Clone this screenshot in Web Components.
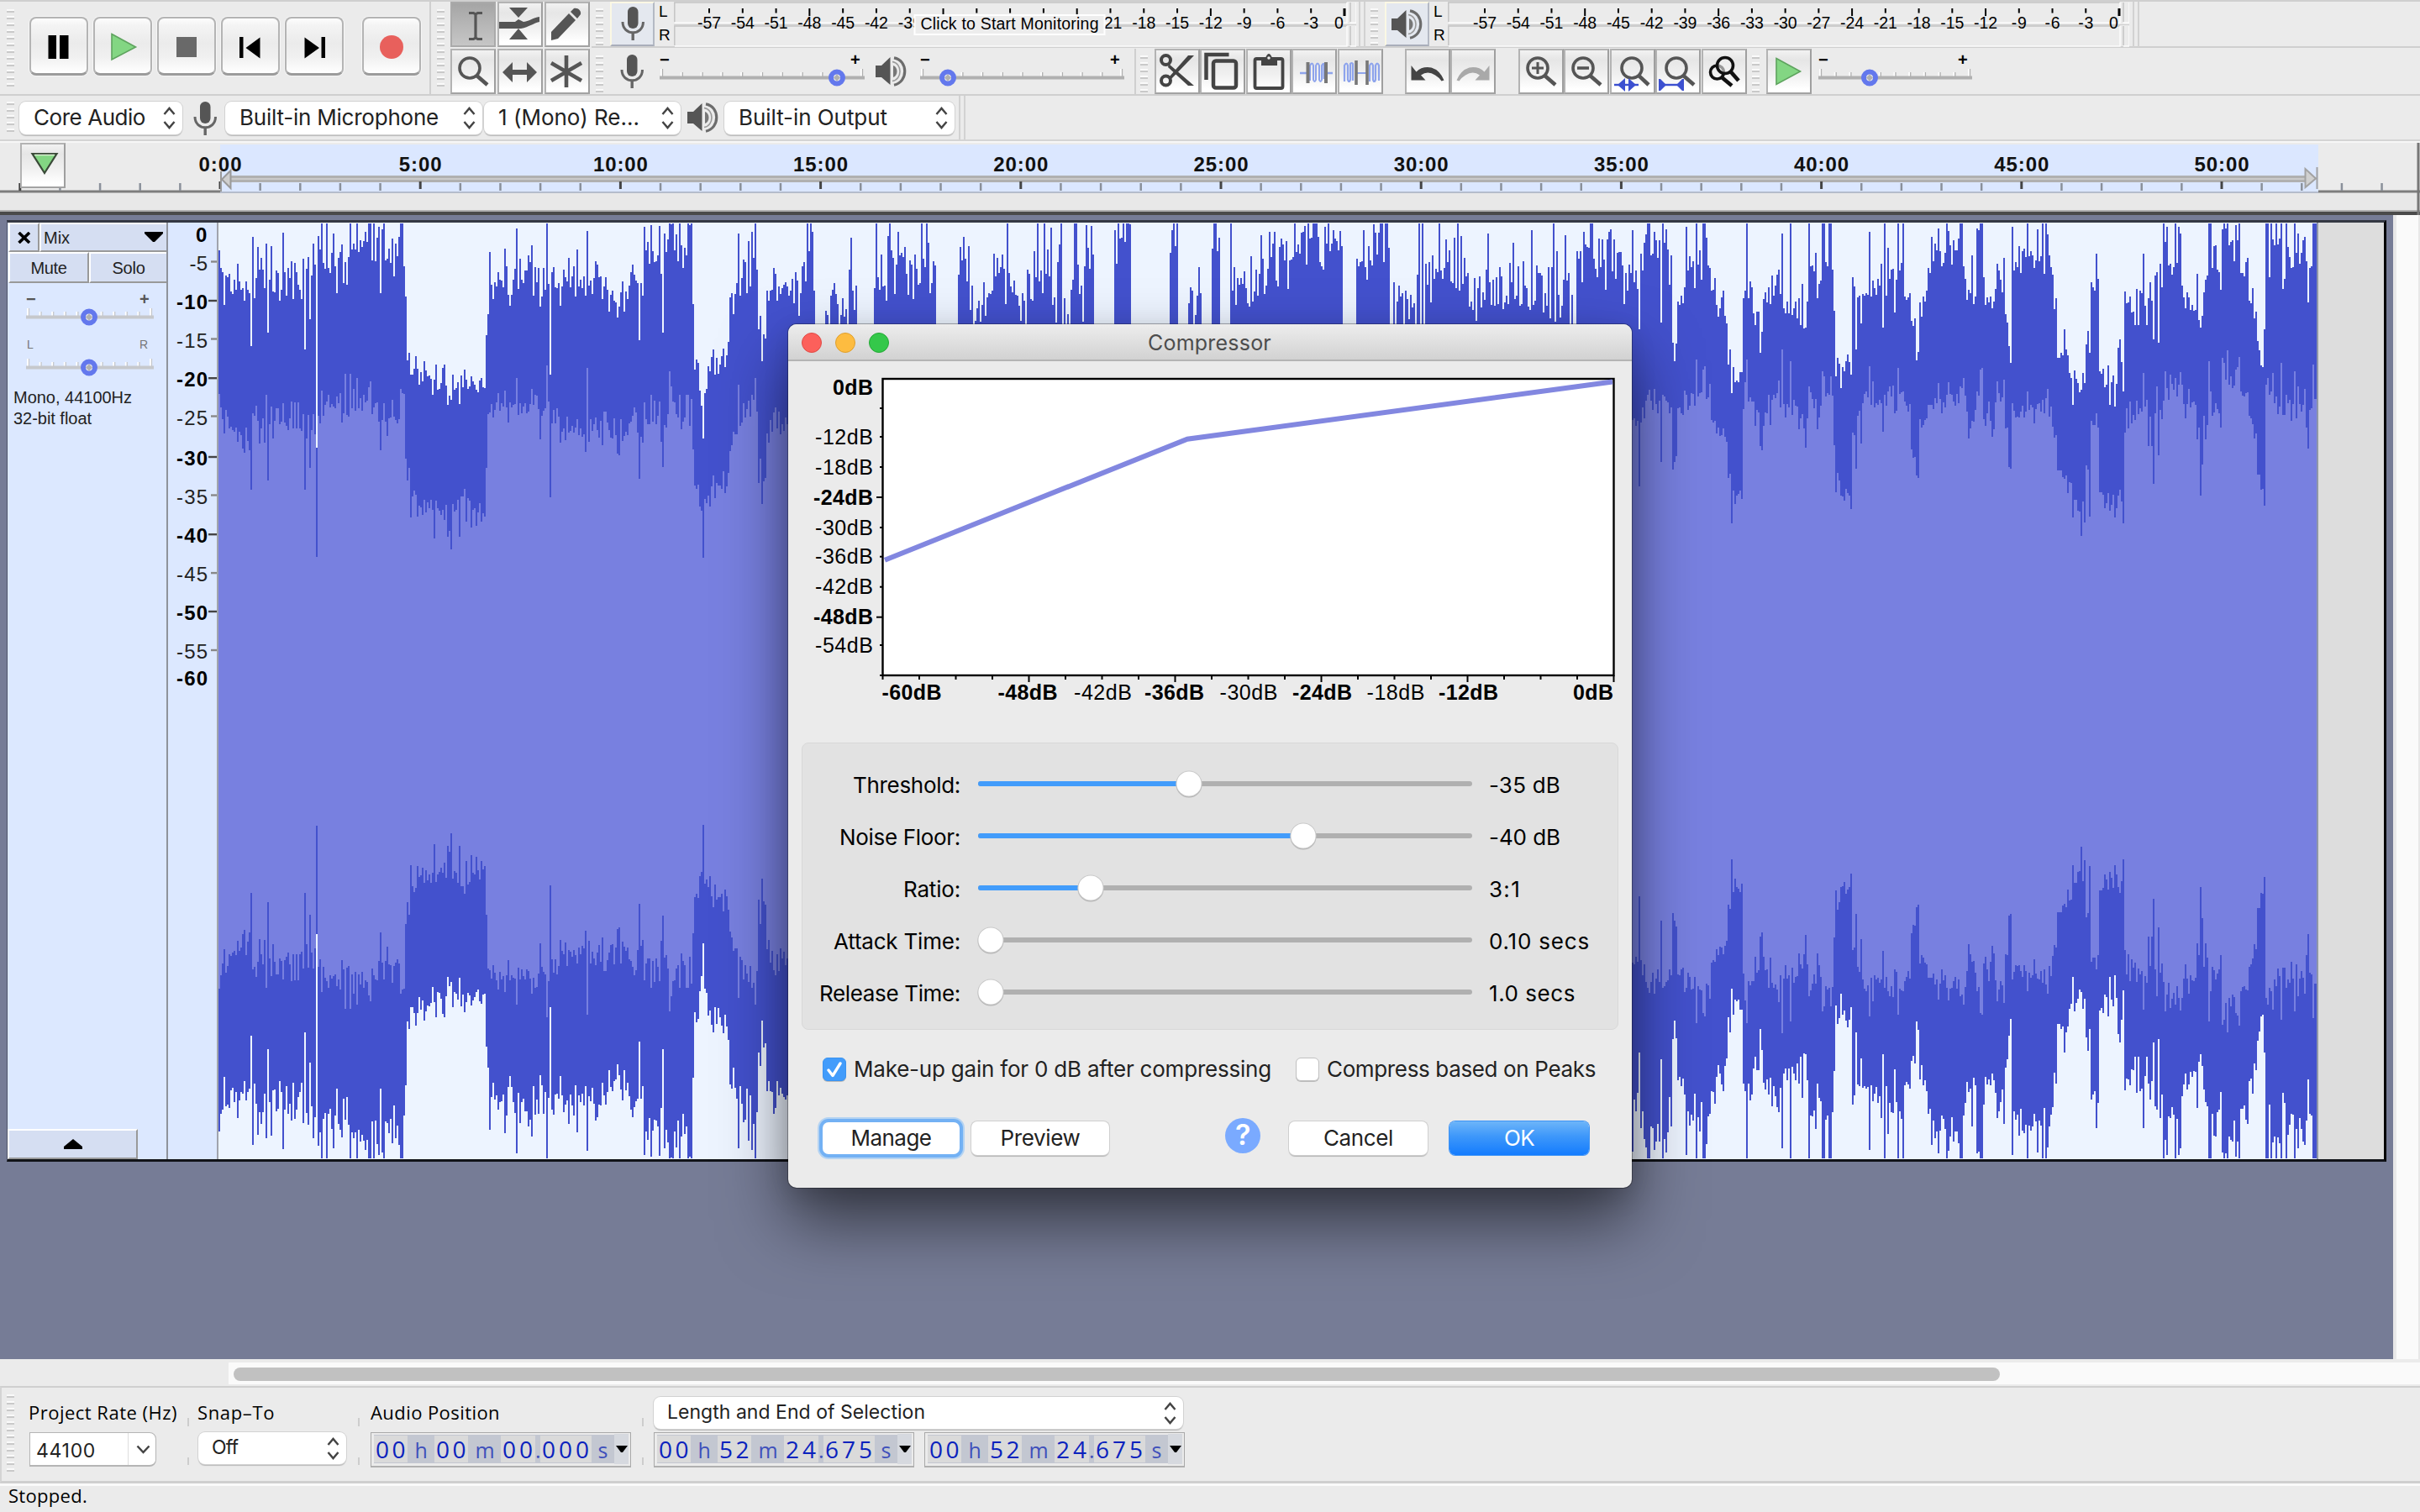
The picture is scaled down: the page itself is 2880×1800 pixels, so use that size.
<!DOCTYPE html>
<html lang="en">
<head>
<meta charset="utf-8">
<title>Mix</title>
<style>
html,body{margin:0;padding:0;width:2880px;height:1800px;overflow:hidden;background:#ebebeb}
body{font-family:Inter,"Liberation Sans",sans-serif;color:#000}
</style>
</head>
<body>
<audio-app></audio-app>
<script>
const SANS = '"Liberation Sans",sans-serif';
const UI = 'Inter,"Liberation Sans",sans-serif';
const HUM = '"Open Sans","Noto Sans",sans-serif';
const pen = document.createElement('canvas').getContext('2d');

function define(name, render) {
  customElements.define(name, class extends HTMLElement {
    connectedCallback() {
      if (this.shadowRoot) return;
      const root = this.attachShadow({ mode: 'open' });
      root.innerHTML = render(this);
    }
  });
}
const num = (el, k, d = 0) => el.hasAttribute(k) ? parseFloat(el.getAttribute(k)) : d;

/* One line of text, tracked so that it fills the width w */
define('fit-text', el => {
  const w = num(el, 'w'), size = num(el, 'size', 26), weight = el.getAttribute('weight') || '400';
  const fam = { ui: UI, sans: SANS, hum: HUM }[el.getAttribute('face') || 'ui'];
  const txt = el.textContent;
  pen.font = `${weight} ${size}px ${fam}`;
  const ls = w ? (w - pen.measureText(txt).width) / txt.length : 0;
  return `<style>:host{display:block;flex:none;white-space:nowrap;${w ? `width:${w}px;` : ''}font:${weight} ${size}px/1.2 ${fam};letter-spacing:${ls.toFixed(3)}px}</style><slot></slot>`;
});
const T = (txt, w, size = 26, face = 'ui', style = '', weight = '400') =>
  `<fit-text w="${w}" size="${size}" face="${face}" weight="${weight}" style="${style}">${txt}</fit-text>`;

/* Text on an axis inside an svg */
const S = (x, y, txt, w, size, anchor = 'middle', bold = false, fill = '#000') => {
  const left = anchor === 'middle' ? x - w / 2 : anchor === 'end' ? x - w : x;
  return `<text x="${left}" y="${y}" textLength="${w}" font-size="${size}" font-family='${SANS}' font-weight="${bold ? 700 : 400}" fill="${fill}">${txt}</text>`;
};

const G = '#555';
const lens = (cx, cy, hx, hy, r = 12, c = G) =>
  `<circle cx="${cx}" cy="${cy}" r="${r}" fill="none" stroke="${c}" stroke-width="3.6"/><path d="M${cx + r * .72} ${cy + r * .78}L${hx} ${hy}" stroke="${c}" stroke-width="4.6"/>`;
const ICONS = {
  pause: `<path d="M22.5 22h9.5v28h-9.5zM36 22h10.5v28H36z" fill="#000"/>`,
  play: `<path d="M22 20.500L50.500 36L22 51z" fill="#83d683" stroke="#5ea35e" stroke-width="1.6"/>`,
  stop: `<path d="M23 24h24v24H23z" fill="#696969"/>`,
  prev: `<path d="M22 24h4.500v25H22zM46.500 24.500v25L29.500 37z" fill="#000"/>`,
  next: `<path d="M43.500 24h4.500v25h-4.500zM23.500 24.500v25L41 37z" fill="#000"/>`,
  record: `<circle cx="35" cy="36" r="14" fill="#e8605c"/>`,
  ibeam: `<path d="M22 13.500h5.500l2.500 1.500l2.500-1.500H38M22 44.500h5.500l2.500-1.500l2.500 1.500H38M30 14.500v29" stroke="${G}" stroke-width="3.200" fill="none"/>`,
  envelope: `<path d="M14 7h22L25 19zM14 45h22L25 32z" fill="${G}"/><path d="M2 24h19l4-3l6 3c8-1 11-5 19-6v6c-8 2-12 6-22 8H2z" fill="${G}"/>`,
  pencil: `<path d="M8 46v-10L29 14l8 8L16 44zM31 12l4-4c5-1 9 3 8 7l-4 5z" fill="${G}"/>`,
  zoom: lens(23, 23, 44, 43),
  shift: `<path d="M6 28L18 16v9h17v-9l12 12l-12 12v-9H18v9z" fill="${G}"/>`,
  multi: `<path d="M26 8v38M8 17l36 21M44 17L8 38" stroke="${G}" stroke-width="4.600"/>`,
  cut: `<g fill="none" stroke="#444" stroke-width="4"><circle cx="13.500" cy="13.500" r="5.500"/><circle cx="13.500" cy="38" r="5.500"/></g><path d="M17 18L47 44h-7L16 22zM17 34L40 8h7L19 37z" fill="#444"/>`,
  copy: `<path d="M7.500 37V7h27" fill="none" stroke="#444" stroke-width="4.500"/><rect x="16" y="14.500" width="27" height="32" rx="3" fill="none" stroke="#444" stroke-width="4.500"/>`,
  paste: `<rect x="10.500" y="12" width="33" height="35" rx="2" fill="none" stroke="#444" stroke-width="3.800"/><path d="M18 20V11h5q4-10 8 0h6v9z" fill="#444"/><circle cx="27" cy="11" r="1.800" fill="#eee"/>`,
  trim: `<path d="M10 29h9M42 29h7" stroke="#8ea4ec" stroke-width="2.600"/><path d="M22 38V20q2.500-5 4 0v17q1.500 4 3 0V20q2-5 4 0v17q1.500 4 3 0V20q1.500-3 2.500-2v18" fill="none" stroke="#8ea4ec" stroke-width="2"/><path d="M19.500 16v25M41 16v25" stroke="#777" stroke-width="4"/>`,
  silence: `<path d="M8 39V20q2.500-5 4 0v17q1.500 4 3 0V18q2-2 3 0v20M38 39V20q2.500-5 4 0v17q1.500 4 3 0V20q2-5 4 0v18M22 29h13" fill="none" stroke="#8ea4ec" stroke-width="2.200"/><path d="M22 14v29M35 14v29" stroke="#777" stroke-width="3.600"/>`,
  undo: `<path d="M7.500 20v17.500h17l-5.500-6q8-6 17 0q5 3 7.500 7l3-1q-5-12-15-15q-11-2-18 5z" fill="#444"/>`,
  redo: `<path d="M46.500 20v17.500h-17l5.500-6q-8-6-17 0q-5 3-7.500 7l-3-1q5-12 15-15q11-2 18 5z" fill="#a9a9a9"/>`,
  zin: lens(23, 23, 44, 43) + `<path d="M16 23h14M23 16v14" stroke="${G}" stroke-width="3"/>`,
  zout: lens(23, 23, 44, 43) + `<path d="M16 23h14" stroke="${G}" stroke-width="3.600"/>`,
  zsel: lens(26, 23, 46, 43) + `<path d="M5 43h29" stroke="#3c50d0" stroke-width="2.400"/><path d="M18 35v16l-9-8zM22 35v16l9-8z" fill="#3c50d0"/>`,
  zfit: lens(25, 23, 46, 43) + `<path d="M5 43h28" stroke="#3c50d0" stroke-width="2.400"/><path d="M4 36h2l7 7l-7 7H4zM34 36h-2l-7 7l7 7h2z" fill="#3c50d0"/>`,
  ztog: lens(18.5, 28, 36, 44, 8, '#111') + `<circle cx="28" cy="20" r="9.500" fill="#f2f2f2" fill-opacity=".6"/>` + lens(28, 20, 44, 38, 9.5, '#111'),
  smallplay: `<path d="M12 11.500L40.500 27L12 42.500z" fill="#83d683" stroke="#5ea35e" stroke-width="1.600"/>`,
  pin: `<path d="M14.500 13h29L29 36z" fill="#83d683" stroke="#3a4a38" stroke-width="2.200"/><path d="M17 14.500h24" stroke="#d8f0d0" stroke-width="1.500"/>`
};

define('mic-icon', () => `<style>:host{display:block;flex:none;width:28px;height:41px}svg{display:block}</style>
<svg width="28" height="41"><rect x="8" y="0" width="12.500" height="26" rx="6.200" fill="#555"/><path d="M2 18c0 17 24.500 17 24.500 0" fill="none" stroke="#666" stroke-width="3"/><path d="M14.200 31v9" stroke="#666" stroke-width="3.400"/></svg>`);
define('speaker-icon', () => `<style>:host{display:block;flex:none;width:37px;height:36px}svg{display:block}</style>
<svg width="37" height="36"><path d="M0 11h7L17.500 1v33L7 25H0z" fill="#555"/><path d="M21 11c6 2 6 12 0 14z" fill="#777"/><path d="M20 6.500c12 2 12 21 0 23" fill="none" stroke="#999" stroke-width="1.600"/><path d="M22 1.800c17 3 17 29 0 32.400" fill="none" stroke="#6c6c6c" stroke-width="3.200"/></svg>`);

define('dock-grip', el => `<style>:host{display:block;flex:none;width:9px;height:${num(el, 'n', 6) * 8}px;background:repeating-linear-gradient(#fafafa 0 2px,#c9c9c9 2px 4px,transparent 4px 8px)}</style>`);

define('transport-button', el => `<style>:host{display:block;flex:none;box-sizing:border-box;width:70px;height:70px;border:2px solid #b4b4b4;border-bottom:3px solid #9b9b9b;border-radius:8px;background:linear-gradient(#fdfdfd,#f4f4f4 12%,#ebebeb 45%,#f0f0f0 70%,#fff);box-shadow:0 0 0 1px #f6f6f6}svg{display:block;margin:-2px}</style>
<svg width="70" height="70">${ICONS[el.getAttribute('icon')]}</svg>`);

define('tool-button', el => `<style>:host{display:block;flex:none;box-sizing:border-box;width:54px;height:54px;border:2px solid #b3b3b3;border-right-color:#9f9f9f;border-bottom-color:#a3a3a3;background:linear-gradient(#f2f2f2,#e6e6e6 22%,#efefef 55%,#fff 92%)}
:host([down]){background:linear-gradient(#a5a5a5,#b6b6b6 50%,#c6c6c6);border-color:#aaa}svg{display:block;margin:-2px}</style>
<svg width="54" height="54">${ICONS[el.getAttribute('icon')]}</svg>`);
const B = (icon, ml = 0, extra = '') => `<tool-button icon="${icon}" style="margin-left:${ml}px" ${extra}></tool-button>`;

define('mac-select', el => `<style>:host{display:flex;flex:none;align-items:center;justify-content:space-between;box-sizing:border-box;width:${num(el, 'w')}px;height:${num(el, 'h', 39)}px;padding:0 8px 0 ${num(el, 'pl', 17)}px;background:#fff;border-radius:8px;box-shadow:0 0 0 1px #d2d2d2,0 2px 1px #b9b9b9;color:#222}svg{flex:none}</style>
<slot></slot><svg width="15" height="27"><path d="M1.500 9L7.500 2l6 7M1.500 18l6 7l6-7" fill="none" stroke="#444" stroke-width="2.500"/></svg>`);

/* Level meter scale with its L/R bars; ticks every 3 dB from -57 to 0 */
define('level-meter', el => {
  const first = num(el, 'first'), last = num(el, 'last'), w = num(el, 'w'), prompt = el.hasAttribute('prompt');
  let s = '';
  for (let i = 0; i < 20; i++) {
    const db = -57 + i * 3, x = first + (last - first) * i / 19, big = db % 12 === 0;
    s += `<path d="M${x} 8v${big ? 9 : 5.500}" stroke="#000" stroke-width="${db === 0 ? 3 : 2}"/>`;
    if (prompt && db > -39 && db < -21) continue;
    const t = '' + db;
    s += S(db === 0 ? x - 7 : x, 31.500, t, t.length === 3 ? 28 : t.length === 2 ? 18 : 10, 19.5);
  }
  if (prompt) s += `<rect x="286.500" y="16" width="226" height="23" fill="#ededed" stroke="#fff" stroke-width="2"/>` + S(293.5, 33, 'Click to Start Monitoring', 212, 19.5, 'start');
  const e = w - 12;
  return `<style>:host{display:block;flex:none;width:${w}px;height:54px}svg{display:block}</style><svg width="${w}" height="54">
  <g fill="none" stroke-width="1.500"><path d="M.8 24V1h${e}M.8 52V29h${e}M${e + 5} 24V1M${e + 5} 52V29" stroke="#c4c4c4"/><path d="M1 25h${e}V1M1 53h${e}V29M${e + 5} 25h7V1M${e + 5} 53h7V29" stroke="#fdfdfd"/></g>
  <path d="M0 27.500h${w}" stroke="#cfcfcf"/>${s}</svg>`;
});

/* Horizontal gain control with a ring thumb; w is the length of the track */
define('level-slider', el => {
  const w = num(el, 'w'), p = num(el, 'pos'), r = num(el, 'r', 10), marks = (el.getAttribute('marks') || '-,+').split(','), c = el.getAttribute('line') || '#b0b0b0', fs = num(el, 'fs', 20);
  const letters = marks[0] === 'L', ink = el.getAttribute('ink') || '#000';
  let s = '';
  for (let i = 0; i < 11; i++) {
    const x = 2 + (w - 6) * i / 10, y = i % 10 ? 20 : 16;
    s += `<path d="M${x} ${y}v${26 - y}" stroke="#fff" stroke-width="2"/><path d="M${x + 1.500} ${y}v${26 - y}" stroke="${c}" stroke-width="1.300"/>`;
  }
  const mk = letters
    ? S(1, 4, 'L', 8, 14, 'start', false, ink) + S(w - 17, 4, 'R', 10, 14, 'start', false, ink)
    : S(0, 12, '−', 10, fs, 'start', true, ink) + S(w - 17, 12, '+', 11, fs, 'start', true, ink);
  return `<style>:host{display:block;flex:none;width:${w}px;height:40px}svg{display:block;overflow:visible}</style><svg width="${w}" height="40">${mk}${s}<path d="M0 26.500h${w}" stroke="${c}" stroke-width="4"/>
  <circle cx="${p}" cy="26.500" r="${r - 3}" fill="#e6e6ea" stroke="#6378ed" stroke-width="6"/><path d="M${p - 4} 26.500l4-4l4 4l-4 4z" fill="#b0b0b0"/></svg>`;
});

define('transport-bar', () => `<style>:host{display:flex;flex:none;box-sizing:border-box;width:513px;height:112px;border-right:2px solid #cfcfcf;padding:20px 0 0 8px}dock-grip{margin:-9px 18px 0 0}.b{display:flex;gap:6px}.r{margin-left:22px}</style>
<dock-grip n="12"></dock-grip><div class="b"><transport-button icon="pause"></transport-button><transport-button icon="play"></transport-button><transport-button icon="stop"></transport-button><transport-button icon="prev"></transport-button><transport-button icon="next"></transport-button></div><transport-button class="r" icon="record"></transport-button>`);

define('tools-bar', () => `<style>:host{display:flex;flex:none;width:191px;height:112px;padding-left:7px;box-sizing:border-box}dock-grip{margin:11px 7px 0 0}.g{display:grid;grid-template-columns:repeat(3,54px);gap:2px;padding-top:2px;height:110px;grid-template-rows:54px 54px}</style>
<dock-grip n="12"></dock-grip><div class="g">${B('ibeam', 0, 'down')}${B('envelope')}${B('pencil')}${B('zoom')}${B('shift')}${B('multi')}</div>`);

define('meter-bar', () => {
  const lr = `<div class="lr">${T('L', 10, 19, 'sans')}${T('R', 13, 19, 'sans')}</div>`;
  return `<style>:host{display:flex;flex:none;height:57px;box-sizing:border-box;border-bottom:2px solid #cfcfcf;padding-top:2px}
.btn{flex:none;width:53px;height:53px;box-sizing:border-box;background:#e4e8ef;border:2px solid #fbf8e4;border-right-color:#b4b9c4;border-bottom-color:#a9aeba;display:flex;align-items:center;justify-content:center}
.lr{flex:none;width:17px;margin-left:5px;display:flex;flex-direction:column;gap:5px;padding-top:1px}dock-grip{margin:8px 8px 0 5px}.sep{flex:none;width:4px;height:54px;border-left:2px solid #d2d2d2;border-right:2px solid #d2d2d2}</style>
<dock-grip></dock-grip><div class="btn" style="margin-left:0"><mic-icon></mic-icon></div>${lr}<level-meter prompt style="margin-left:1px" w="812" first="42" last="798"></level-meter>
<div class="sep" style="margin-left:3px"></div><dock-grip style="margin-left:6px"></dock-grip><div class="btn" style="margin-left:0"><speaker-icon></speaker-icon></div>${lr}<level-meter w="811" first="44" last="799"></level-meter><div class="sep" style="margin-left:4px"></div>`;
});

define('mixer-bar', () => `<style>:host{display:flex;flex:none;height:55px;align-items:flex-start;padding-top:1px;box-sizing:border-box}dock-grip{margin-top:8px}.sep{width:2px;height:54px;background:#cfcfcf;flex:none}.g{display:flex;flex:none}.g tool-button + tool-button{margin-left:.4px!important}</style>
<dock-grip style="margin-left:5px"></dock-grip><mic-icon style="margin:7px 19px 0 20px"></mic-icon><level-slider w="244" pos="211" style="margin-top:8px"></level-slider>
<speaker-icon style="margin:9px 16px 0 13px"></speaker-icon><level-slider w="243" pos="33" style="margin-top:8px"></level-slider>
<div class="sep" style="margin-left:12px"></div><dock-grip style="margin-left:5px"></dock-grip>
<div class="g" style="margin-left:8px">${['cut', 'copy', 'paste', 'trim', 'silence'].map(i => B(i)).join('')}</div>
<div class="g" style="margin-left:26px">${B('undo')}${B('redo')}</div>
<div class="g" style="margin-left:27px">${['zin', 'zout', 'zsel', 'zfit', 'ztog'].map(i => B(i)).join('')}</div>
<dock-grip style="margin-left:6px"></dock-grip>${B('smallplay', 8)}<level-slider w="183" pos="61" style="margin:8px 0 0 8px"></level-slider>`);

define('device-bar', () => `<style>:host{display:flex;height:56px;box-sizing:border-box;border-top:2px solid #cfcfcf;border-bottom:2px solid #d4d4d4;align-items:center;padding-bottom:3px}.sep{align-self:stretch;margin-bottom:-3px;width:4px;border-left:2px solid #d2d2d2;border-right:2px solid #d2d2d2}mac-select{margin-top:3px}</style>
<dock-grip n="5" style="margin:5px 6px 0 8px"></dock-grip><mac-select w="194">${T('Core Audio', 133)}</mac-select><mic-icon style="margin:5px 10px 0 13px"></mic-icon>
<mac-select w="306">${T('Built-in Microphone', 237)}</mac-select><mac-select w="234" style="margin-left:2px">${T('1 (Mono) Re...', 168)}</mac-select>
<speaker-icon style="margin:3px 7px 0 8px"></speaker-icon><mac-select w="274">${T('Built-in Output', 177)}</mac-select><div class="sep" style="margin-left:5px"></div>`);

define('time-ruler', () => {
  let s = '';
  for (let i = -5; i < 55; i++) {
    const x = 262 + i * 47.640;
    if (x > 2880 || x < 20) continue;
    const big = i % 5 === 0, out = x < 261 || x > 2760;
    s += `<path d="M${x} ${big && !out ? 48 : 50}v9" stroke="${big ? '#444' : '#8a909a'}" stroke-width="${big ? 3 : 2.500}"/>`;
    if (big && i >= 0 && i <= 50) { const m = i + ':00'; s += S(x, 36, m, m.length === 4 ? 51 : 65, 24, 'middle', true, '#111'); }
  }
  return `<style>:host{display:block;height:88px;position:relative}svg{display:block}tool-button{position:absolute;left:24px;top:2px}</style>
  <svg width="2880" height="88"><path d="M0 1h2880" stroke="#f6f6f6" stroke-width="2"/><path d="M262 4h2497v57H262z" fill="#dbe7ff"/><path d="M0 60h262M2759 60h121" stroke="#7d7d7d" stroke-width="3"/><path d="M262 61h2497" stroke="#b4bccb" stroke-width="2"/>
  <path d="M0 62h2880v20H0z" fill="#e8e8e8"/><path d="M0 83h2880" stroke="#b0b0b0" stroke-width="2"/><path d="M0 86h2880" stroke="#4a4a4a" stroke-width="4"/>
  <path d="M275 41h2470v8H275z" fill="#b0b0b0"/><path d="M275 44h2470v2H275z" fill="#cacaca"/>${s}
  <path d="M274.500 35v21L264 45.500zM263 36v24" fill="#cfcfcf" stroke="#9a9a9a" stroke-width="2"/><path d="M2743.500 33v22L2756 44.500zM2757.500 31v26" fill="#d0d0d0" stroke="#a2a2a2" stroke-width="2"/>
  <path d="M2878 2v86" stroke="#777" stroke-width="3"/></svg><tool-button icon="pin"></tool-button>`;
});

define('track-panel', () => `<style>:host{display:flex;flex-direction:column;flex:none;width:191px;box-sizing:border-box;border-right:2px solid #8f939b;background:#dce8ff;color:#222}
.row{display:flex;flex:none;padding-left:1px}.c{display:flex;align-items:center;justify-content:center;box-sizing:border-box;height:35px;background:#d5def2;border:2px solid #fff;border-right-color:#999;border-bottom-color:#999}
.t{flex:1;justify-content:space-between;padding:0 4px 0 3px;border-right:0}.info{padding:9px 0 0 7px;flex:1}.up{width:155px;height:36px}</style>
<div class="row"><div class="c" style="width:37px"><svg width="16" height="14"><path d="M1.500 1l12.500 12M14 1L1.500 13" stroke="#000" stroke-width="3.600"/></svg></div><div class="c t">${T('Mix', 31, 20, 'sans')}<svg width="22" height="13"><path d="M0 0h22v2L12 12h-2L0 2z" fill="#000"/></svg></div></div>
<div class="row"><div class="c" style="width:96px;height:37px">${T('Mute', 43, 20, 'sans')}</div><div class="c" style="flex:1;height:37px;border-right:0">${T('Solo', 39, 20, 'sans')}</div></div>
<level-slider w="152" pos="75" line="#c6c8cc" ink="#555" style="margin:14px 0 0 22px"></level-slider><level-slider w="152" pos="75" line="#c6c8cc" ink="#777" marks="L,R" style="margin:20px 0 0 22px"></level-slider>
<div class="info">${T('Mono, 44100Hz', 141, 20, 'sans', 'margin-top:1px')}${T('32-bit float', 93, 20, 'sans', 'margin-top:1px')}</div>
<div class="c up"><svg width="22" height="12"><path d="M11 0l11 9v3H0V9z" fill="#000"/></svg></div>`);

define('db-ruler', () => {
  const ys = [279.500, 313, 359.500, 405, 451.700, 497, 545.500, 591, 637.700, 683.600, 729.500, 775.500, 807.600];
  let s = '';
  ys.forEach((y, i) => {
    const v = -5 * i, b = i % 2 === 0, t = '' + v;
    s += S(47, y - 265 + 8.500, t, i === 0 ? 14 : i === 1 ? 21.500 : 37, 24, 'end', b, b ? '#000' : '#222');
    if (i && i < 12) s += `<path d="M${b ? 48 : 51} ${y - 266.500}H58" stroke="${b ? '#444' : '#888'}" stroke-width="2.400"/>`;
  });
  return `<style>:host{display:block;flex:none;width:60px;box-sizing:border-box;background:#dce8ff;border-right:2px solid #a0a4ac}svg{display:block}</style><svg width="58" height="1115">${s}</svg>`;
});

/* Waveform (dB): rows of [x, peak y, peak spread, rms y, rms spread], held until the next x */
const SHAPE = [
[260,325,24,500,20],[282,335,26,512,22],[300,322,28,502,20],[324,325,20,495,18],[355,330,22,505,18],[372,315,28,500,18],[382,308,28,482,20],[415,292,24,480,18],[450,306,28,505,22],[464,295,24,492,14],[480,318,10,468,5],[482,352,4,548,3],[484,426,6,560,8],[488,440,18,592,20],[495,452,18,604,18],[540,456,16,604,18],[574,458,10,612,10],[577,392,6,555,5],[579,372,8,490,6],[582,332,22,482,16],[640,338,20,492,16],[668,326,22,508,20],[696,340,20,512,20],[750,328,22,500,18],[766,302,26,498,20],[800,292,24,486,20],[823,392,20,530,20],[825,440,10,578,10],[832,455,22,600,18],[842,440,14,585,14],[858,430,14,580,10],[867,352,12,530,14],[871,332,28,500,16],[898,330,22,495,18],[901,402,18,570,14],[911,346,16,506,14],[950,358,16,510,14],[954,310,26,490,14],[970,420,15,540,10],[982,368,22,510,14],[990,350,26,500,14],[1008,345,24,500,14],[1019,420,15,550,10],[1040,312,32,490,10],[1105,335,30,500,10],[1113,440,15,560,10],[1139,322,26,490,10],[1153,362,20,500,10],[1182,330,26,500,10],[1202,345,28,500,10],[1230,322,28,500,10],[1254,345,34,500,10],[1290,310,26,480,10],[1302,430,15,560,10],[1326,292,26,480,10],[1346,430,15,560,10],[1392,290,18,480,10],[1402,430,15,560,10],[1414,345,28,490,10],[1430,430,15,560,10],[1442,292,22,490,10],[1452,430,15,560,10],[1464,322,36,490,10],[1484,348,22,490,10],[1498,312,28,490,10],[1540,290,24,480,10],[1598,440,15,560,10],[1614,302,20,490,10],[1640,282,22,490,10],[1653,372,40,500,10],[1700,322,26,490,10],[1740,342,26,490,10],[1800,335,32,490,10],[1845,358,38,500,10],[1875,302,28,490,10],[1925,335,26,500,10],
[1941,340,30,500,20],[1952,315,20,490,16],[1957,292,18,478,12],[1985,338,20,488,12],[1989,415,14,545,16],[1995,340,20,480,14],[2006,330,26,475,14],[2028,300,20,462,18],[2035,345,30,495,20],[2041,378,14,520,10],[2046,358,10,515,10],[2052,392,14,528,10],[2056,428,10,570,12],[2061,445,18,592,14],[2070,436,6,584,6],[2073,345,14,470,14],[2086,398,24,500,14],[2093,405,14,532,18],[2098,352,12,490,16],[2108,338,24,474,14],[2124,368,18,488,14],[2140,356,24,494,16],[2153,322,20,480,14],[2173,316,14,472,14],[2181,372,6,540,20],[2183,438,14,576,12],[2192,440,12,588,8],[2204,334,10,512,8],[2208,362,16,500,16],[2216,342,16,470,14],[2242,326,22,470,14],[2266,355,10,484,10],[2273,392,12,542,12],[2279,424,10,562,10],[2283,356,16,500,12],[2292,334,20,490,12],[2302,300,22,478,14],[2336,342,22,486,22],[2346,330,34,500,24],[2362,358,18,500,22],[2374,330,18,468,14],[2385,380,12,510,16],[2394,305,24,486,16],[2440,326,10,498,12],[2444,362,6,520,6],[2447,425,10,570,12],[2456,430,16,575,20],[2462,440,16,580,16],[2466,458,14,604,12],[2482,400,18,560,30],[2488,340,10,512,10],[2498,445,16,590,16],[2510,456,18,596,14],[2519,415,10,584,10],[2524,444,16,606,14],[2528,360,16,500,16],[2540,362,24,486,14],[2556,346,36,508,34],[2576,320,28,460,14],[2598,362,14,482,14],[2614,362,22,520,34],[2622,330,20,500,20],[2632,308,20,484,16],[2644,292,16,452,16],[2666,318,14,472,12],[2676,348,12,496,12],[2682,372,8,524,10],[2685,412,12,560,18],[2690,434,6,582,8],[2694,380,8,570,8],[2696,316,26,468,14],[2706,308,30,482,16],[2744,330,26,500,18],[2754,268,2,470,6]];
const SPIKES = [[298,412,583],[318,396,572],[362,416,583],[376,533,663],[410,312,445],[424,266,450],[456,262,480],[316,290,470],[336,277,480],[388,266,478],[416,266,445],[476,266,463],[478,266,468],[614,272,450],[600,296,465],[516,452,641],[560,448,628],[650,266,435],[654,446,592],[698,275,438],[755,280,455],[760,405,570],[774,268,470],[796,266,442],[798,267,460],[818,266,470],[822,266,475],[836,522,664],[898,266,450],[878,278,458],[894,276,470],[788,396,556],[906,430,600],
[960,266,470],[966,276,480],[1042,266,480],[1096,266,480],[1068,276,480],[1198,266,480],[1234,266,480],[1242,266,480],[1262,266,480],[1280,266,480],[1278,266,480],[1292,268,480],[1298,269,480],[1330,266,480],[1336,266,480],[1340,266,480],[1396,266,480],[1400,266,480],[1444,266,480],[1446,266,480],[1464,266,480],[1516,276,480],[1540,266,480],[1564,266,480],[1566,266,480],[1550,276,480],[1644,266,480],[1648,266,480],[1650,266,480],[1688,266,480],[1692,266,480],[1734,266,480],[1822,274,480],[1848,266,480],[1862,280,480],[1884,276,480],[1894,266,480],
[1942,274,500],[1950,392,579],[1960,266,470],[1962,266,464],[1978,266,470],[1976,384,550],[2006,270,470],[2018,266,428],[2026,266,440],[2028,266,436],[2060,468,623],[2078,266,428],[2120,278,416],[2130,266,430],[2152,266,460],[2168,266,442],[2170,266,448],[2176,266,470],[2178,266,448],[2148,390,533],[2190,462,590],[2202,446,606],[2224,276,436],[2242,266,470],[2258,266,438],[2264,266,466],[2240,390,514],[2208,416,558],[2306,272,456],[2316,266,470],[2332,266,460],[2334,266,462],[2352,272,466],[2356,266,440],[2358,266,438],[2390,412,556],[2392,432,558],[2394,270,480],[2412,266,466],[2430,266,476],[2434,266,474],[2466,482,616],[2476,464,638],[2480,456,622],[2486,420,615],[2510,482,608],[2516,484,616],[2526,466,623],[2456,392,570],[2494,302,492],[2550,302,444],[2562,404,576],[2568,408,542],[2578,270,462],[2588,266,450],[2592,270,458],[2618,390,590],[2628,266,430],[2630,266,466],[2646,266,432],[2650,266,417],[2660,268,440],[2664,266,425],[2694,392,602],[2696,266,458],[2698,266,450],[2702,266,466],[2708,266,472],[2714,266,432],[2720,266,470],[2730,266,442],[2746,360,534],[2752,266,434],[2754,266,475],[2756,266,475]];
define('wave-view', () => {
  let seed = 4711;
  const rnd = () => { seed = (seed + 0x6D2B79F5) | 0; let t = Math.imul(seed ^ seed >>> 15, 1 | seed); t = t + Math.imul(t ^ t >>> 7, 61 | t) ^ t; return ((t ^ t >>> 14) >>> 0) / 4294967296; };
  const sp = new Map(SPIKES.map(s => [s[0], s]));
  let k = 0, outer = '', inner = '';
  for (let x = 260; x < 2758; x += 2) {
    while (k < SHAPE.length - 1 && SHAPE[k + 1][0] <= x) k++;
    const [, o, oa, i, ia] = SHAPE[k];
    const a = rnd() * 1.300 + rnd() * .7 - 1, b = a * .5 + (rnd() + rnd() - 1) * .9;
    const tail = rnd(), wide = oa > 18 ? 1.700 : 1.350;
    let yo = o + a * oa * wide + (tail < .1 ? -oa * 1.100 : tail > .95 ? oa : 0), yi = i + b * ia * 1.500 + (tail > .95 ? ia * 1.500 : tail < .05 ? -ia : 0);
    const s = sp.get(x); if (s) { yo = s[1]; yi = s[2]; }
    yo = Math.max(266, Math.round(yo)); yi = Math.round(yi);
    outer += `M${x - 260} ${yo - 265}h2V${1380 - yo}h-2z`;
    inner += `M${x - 260} ${yi - 265}h2V${1381 - yi}h-2z`;
  }
  return `<style>:host{display:block;flex:none;width:2577px;height:1115px;background:#ddd}svg{display:block}</style><svg width="2577" height="1115" shape-rendering="crispEdges"><path d="M0 0h2497v1115H0z" fill="#edf4ff"/><path d="${outer}" fill="#4351cd"/><path d="${inner}" fill="#7880e0"/><path d="M2497.500 0v1115" stroke="#8f97a8" stroke-width="2"/></svg>`;
});

define('track-area', () => `<style>:host{display:flex;height:1362px}.cv{flex:none;width:2848px;background:#767c96;box-sizing:border-box;padding:6px 8px 0}
.tr{display:flex;height:1115px;border-top:3px solid #343843;border-bottom:3px solid #111318;border-right:3px solid #000;border-left:1px solid #4f5468;width:2828px}
.sc{flex:1;background:#fafafa;border-left:4px solid #e8e8e8;border-right:2px solid #e8e8e8}</style>
<div class="cv"><div class="tr"><track-panel></track-panel><db-ruler></db-ruler><wave-view></wave-view></div></div><div class="sc"></div>`);

define('scroll-strip', () => `<style>:host{display:flex;height:32px;padding-left:272px}.t{flex:1;height:26px;margin-top:4px;background:#fafafa;display:flex;align-items:center;padding:1px 0 0 6px;box-sizing:border-box}.h{width:2102px;height:16px;border-radius:8px;background:#c1c1c1}</style><div class="t"><div class="h"></div></div>`);

define('time-field', el => {
  const parts = el.getAttribute('value').split(' ');
  const g = (t, w) => `<span class="d" style="width:${w}px">${T(t, w - 1, 28, 'hum', '', '500')}</span>`;
  const u = (t, w, iw) => `<span class="u" style="width:${w}px">${T(t, iw, 25, 'hum')}</span>`;
  return `<style>:host{display:flex;flex:none;box-sizing:border-box;width:310px;height:42px;border:1px solid #a9a9a9;border-bottom:2px solid #b0b0b0;padding:2px 2px 3px 3px;background:#ebebeb;color:#0a22bd}
.i{display:flex;flex:1;background:#c3c7d1;align-items:center}.d{display:flex;flex:none;height:32px;align-items:center;background:#dadada;box-sizing:border-box;padding:2px 0 0 2px}.u{display:flex;flex:none;justify-content:center;color:#3f50bb;align-items:center;padding-top:2px}
.a{flex:none;width:17px;height:36px;background:#d6d9df;display:flex;align-items:center;justify-content:center;margin-left:auto}</style>
<div class="i">${g(parts[0], 40)}${u('h', 32, 15)}${g(parts[1], 40)}${u('m', 39, 22)}${g(parts[2], 41)}${u('.', 6, 6)}${g(parts[3], 61)}${u('s', 27, 12)}<span class="a"><svg width="14" height="8"><path d="M0 0h14L8 8H6z" fill="#000"/></svg></span></div>`;
});

define('selection-bar', () => `<style>:host{display:flex;box-sizing:border-box;height:116px;border-top:2px solid #cfcfcf;border-bottom:3px solid #cfcfcf;border-left:2px solid #d4d4d4;padding-left:6px}
dock-grip{margin:8px 17px 0 0}.c{display:flex;flex-direction:column;flex:none}.lab{height:42px;margin-top:8px;display:flex;align-items:center}.row{display:flex;gap:12px}
.v{flex:none;width:2px;margin:36px 0 0;height:56px;background:linear-gradient(#cdcdcd 0 10px,transparent 10px 47px,#cdcdcd 47px)}
.combo{display:flex;box-sizing:border-box;width:151px;height:41px;border:1px solid #b5b5b5;border-bottom:2px solid #b5b5b5;border-radius:0 8px 8px 0;background:#fff}.n{box-sizing:border-box;width:117px;padding:8px 0 0 7px;border-right:1px solid #ddd;color:#222;line-height:1}.combo svg{margin:14px 0 0 9px}</style>
<dock-grip n="12"></dock-grip>
<div class="c" style="width:189px"><div class="lab">${T('Project Rate (Hz)', 177, 22, 'hum')}</div><div class="combo" style="margin:3px 0 0 1px"><div class="n">${T('44100', 71, 23)}</div><svg width="17" height="12"><path d="M1.500 1.500L8.500 9l7-7.500" fill="none" stroke="#444" stroke-width="2.500"/></svg></div></div>
<div class="v"></div>
<div class="c" style="width:191px;margin-left:10px"><div class="lab">${T('Snap–To', 92, 22, 'hum')}</div><mac-select w="176" h="38" pl="16" style="margin:3px 0 0 1px">${T('Off', 31, 23)}</mac-select></div>
<div class="v"></div>
<div class="c" style="width:323px;margin-left:13px"><div class="lab">${T('Audio Position', 154, 22, 'hum')}</div><time-field value="00 00 00 000" style="margin-top:3px"></time-field></div>
<div class="v"></div>
<div class="c" style="margin-left:12px"><div class="lab" style="margin-top:9px"><mac-select w="630" h="38" pl="16">${T('Length and End of Selection', 307, 23)}</mac-select></div><div class="row" style="margin-top:2px"><time-field value="00 52 24 675"></time-field><time-field value="00 52 24 675"></time-field></div></div>`);

define('status-line', () => `<style>:host{display:flex;height:34px;border-top:3px solid #fafafa;box-sizing:border-box;padding:0 0 8px 10px;align-items:center}</style>${T('Stopped.', 94, 22, 'hum')}`);

/* Compressor dialog pieces */
define('curve-plot', () => {
  const ox = 938, oy = 430; let s = '';
  [[461.7,'0dB',0,48,1],[486,'',1],[520,'-12dB',1,69],[556,'-18dB',1,69],[592,'-24dB',2,71,1],[628,'-30dB',1,69],[662.7,'-36dB',1,69],[698.7,'-42dB',1,69],[734.7,'-48dB',2,71,1],[768,'-54dB',1,69],[804,'',1]].forEach(([y, t, k, w, b]) => {
    if (t) s += S(101, y - oy + 8.5, t, w, 25, 'end', !!b);
    if (k) s += `<path d="M${k === 2 ? 105 : 109} ${y - oy}H113" stroke="#000" stroke-width="2"/>`;
  });
  for (let i = 0; i <= 20; i++) s += `<path d="M${112.500 + i * 43.500} 374v${i % 4 || !i ? 5 : 8}" stroke="#000" stroke-width="2"/>`;
  [[1085,'-60dB',1],[1223,'-48dB',1],[1312.5,'-42dB'],[1397.5,'-36dB',1],[1486,'-30dB'],[1573.5,'-24dB',1],[1661,'-18dB'],[1747.5,'-12dB',1],[1896,'0dB',1]].forEach(([x, t, b]) => s += S(x - ox, 402.5, t, t === '0dB' ? 48 : b ? 71 : 69, 25, 'middle', !!b));
  return `<style>:host{display:block;height:454px}svg{display:block}</style><svg width="1004" height="454"><rect x="112.500" y="21" width="870" height="353" fill="#fff" stroke="#000" stroke-width="2.400"/><path d="M115 236.700L475 92.700L981 24.500" fill="none" stroke="#8287e0" stroke-width="6"/>${s}</svg>`;
});

define('param-row', el => {
  const p = num(el, 'pos'), on = p > 16;
  return `<style>:host{display:flex;height:62px;align-items:center}.l{width:188px;display:flex;justify-content:flex-end}.s{flex:none;width:588px;margin:-4px 20px 0 21px;height:62px}svg{display:block;overflow:visible}</style>
<div class="l">${T(el.getAttribute('label'), num(el, 'lw'))}</div><div class="s"><svg width="588" height="62"><rect y="28" width="588" height="6" rx="3" fill="#b0b0b0"/>${on ? `<rect y="28" width="${p}" height="6" rx="3" fill="#429cfb"/>` : ''}<circle cx="${p}" cy="32" r="15.500" fill="#b4b4b4"/><circle cx="${p}" cy="31" r="15.500" fill="#c9c9c9"/><circle cx="${p}" cy="31" r="14.600" fill="#fff"/></svg></div>${T(el.getAttribute('value'), num(el, 'vw'))}`;
});

define('check-option', el => `<style>:host{display:flex;flex:none;align-items:center;gap:9px;color:#222}i{display:block;box-sizing:border-box;width:28px;height:28px;border-radius:6px;border:1px solid #c0c0c0;background:#fff;box-shadow:0 1px 0 #bbb}:host([on]) i{background:#429cfb;border-color:#3b93f0}svg{display:block;margin:-1px}</style>
<i>${el.hasAttribute('on') ? '<svg width="28" height="28"><path d="M7 15l5 6.500l9-14.500" fill="none" stroke="#fff" stroke-width="3.400" stroke-linecap="round" stroke-linejoin="round"/></svg>' : ''}</i><slot></slot>`);

define('push-button', el => `<style>:host{display:flex;flex:none;box-sizing:border-box;width:${num(el, 'w', 165)}px;height:40px;border-radius:7px;background:#fff;align-items:center;justify-content:center;color:#222;box-shadow:0 0 0 1px #cfcfcf,0 2px 1px #b4b4b4}
:host([primary]){background:linear-gradient(#6db5f9,#3d97fa 45%,#147cfe);color:#fff;box-shadow:0 0 0 1px #3d93f5}:host([focus]){height:38px;box-shadow:0 0 0 4px #73b1f4,0 0 0 6px #b4d3f2}</style><slot></slot>`);

define('compressor-dialog', () => `<style>:host{display:flex;flex-direction:column;position:absolute;left:938px;top:386px;width:1004px;height:1028px;background:#ebebeb;border-radius:10px;overflow:visible;box-shadow:0 0 0 1px rgba(0,0,0,.3),0 40px 80px rgba(0,0,0,.55),0 10px 30px rgba(0,0,0,.12)}
.bar{display:flex;flex:none;align-items:center;height:44px;box-sizing:border-box;border-bottom:2px solid #b4b4b4;border-radius:10px 10px 0 0;background:linear-gradient(#ededed,#d2d2d2);color:#4d4d4d;padding:2px 0 0 16px}
.bar i{display:block;box-sizing:border-box;width:24px;height:24px;border-radius:50%;margin-right:16px}
.grp{flex:none;margin:0 16px;box-sizing:border-box;height:342px;background:#e2e2e2;border:1px solid #d8d8d8;border-radius:8px;padding-top:19px}
.checks{display:flex;margin:30px 0 0 41px;height:34px;align-items:center}.btns{display:flex;align-items:center;margin:42px 0 0 41px;height:46px}
.q{width:42px;height:42px;border-radius:50%;background:#7aaaff;color:#fff;display:flex;align-items:center;justify-content:center;margin:-7px 0 0 138px}</style>
<div class="bar"><i style="background:#fc605b;border:1px solid #e04a45"></i><i style="background:#fdbc40;border:1px solid #df9f2c"></i><i style="background:#34c84a;border:1px solid #24a835"></i>${T('Compressor', 147, 25, 'ui', 'margin-left:292px')}</div>
<curve-plot></curve-plot>
<div class="grp"><param-row label="Threshold:" lw="128" pos="251" value="-35 dB" vw="85"></param-row><param-row label="Noise Floor:" lw="144" pos="387" value="-40 dB" vw="85"></param-row><param-row label="Ratio:" lw="68" pos="134" value="3:1" vw="38"></param-row><param-row label="Attack Time:" lw="151" pos="15" value="0.10 secs" vw="120"></param-row><param-row label="Release Time:" lw="168" pos="15" value="1.0 secs" vw="103"></param-row></div>
<div class="checks"><check-option on>${T('Make-up gain for 0 dB after compressing', 497)}</check-option><check-option style="margin-left:29px">${T('Compress based on Peaks', 320)}</check-option></div>
<div class="btns"><push-button focus w="163">${T('Manage', 96)}</push-button><push-button w="164" style="margin-left:14px">${T('Preview', 95)}</push-button><div class="q">${T('?', 18, 34, 'ui', '', '600')}</div><push-button w="165" style="margin-left:34px">${T('Cancel', 83)}</push-button><push-button primary w="166" style="margin-left:26px">${T('OK', 36)}</push-button></div>`);

define('audio-app', () => `<style>:host{display:flex;flex-direction:column;position:relative;width:2880px;height:1800px;overflow:hidden;background:#ebebeb}
.top{display:flex;flex:none;height:112px;box-sizing:border-box;border-top:2px solid #cfcfcf}.top>*{margin-top:-2px}.r{flex:1;display:flex;flex-direction:column}device-bar,time-ruler,track-area,scroll-strip,selection-bar,status-line{flex:none}</style>
<div class="top"><transport-bar></transport-bar><tools-bar></tools-bar><div class="r"><meter-bar></meter-bar><mixer-bar></mixer-bar></div></div>
<device-bar></device-bar><time-ruler></time-ruler><track-area></track-area><scroll-strip></scroll-strip><selection-bar></selection-bar><status-line></status-line>
<compressor-dialog></compressor-dialog>`);
</script>
</body>
</html>
